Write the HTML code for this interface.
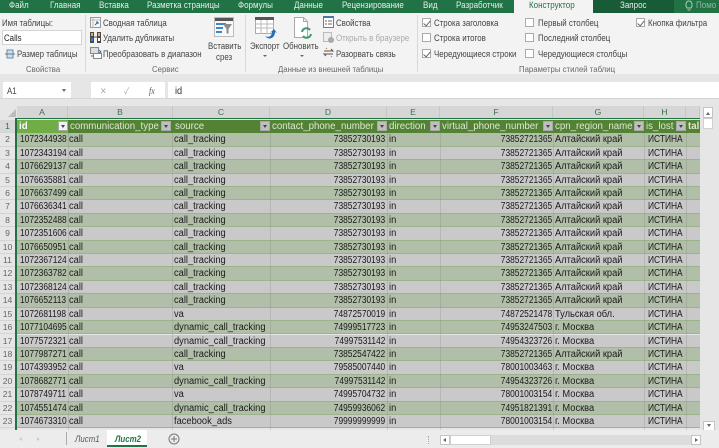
<!DOCTYPE html>
<html lang="ru"><head><meta charset="utf-8"><title>Excel</title>
<style>
*{box-sizing:border-box;margin:0;padding:0}
html,body{width:719px;height:448px;overflow:hidden;background:#e6e6e6}
body{font-family:"Liberation Sans","Noto Sans CJK SC",sans-serif;position:relative}
#w{position:absolute;left:0;top:0;width:719px;height:448px;filter:blur(.3px);overflow:hidden}
.a{position:absolute;white-space:nowrap}
.tab{top:0;height:13px;line-height:10px;font-size:9px;color:#e4efe8;transform:scaleX(.89);transform-origin:left}
.t{font-size:9px;color:#444;line-height:12px;transform:scaleX(.875);transform-origin:left}
.g{font-size:8.6px;color:#666;line-height:11px;transform:scaleX(.905);transform-origin:left}
.cb{width:9px;height:9px;background:#fff;border:1px solid #aaa;position:absolute}
.ck::after{content:"";position:absolute;left:2px;top:0;width:3px;height:6px;border:solid #666;border-width:0 1px 1px 0;transform:rotate(40deg)}
.sep{position:absolute;top:15px;height:57px;width:1px;background:#d8d8d8}
.ch{position:absolute;top:106px;height:12px;background:#d6d6d6;border-right:1px solid #c6c6c6;text-align:center;font-size:8.6px;line-height:12px;color:#3d6f52}
.r{position:absolute;left:17px;width:683px;height:13.41px;font-size:10px;line-height:13px;color:#1a1a1a}
.g1{background:#b1bfa8;border-bottom:1px solid #9db38d}
.g2{background:#c9c9c9;border-bottom:1px solid #9db38d}
.r b{position:absolute;top:0;height:13px;font-weight:normal;white-space:nowrap}
.v{position:absolute;top:133px;width:1px;height:297px;background:rgba(110,120,105,.22)}
.A{left:3px;width:48px}.B{left:52px}.C{left:157px}.D{left:253px;width:115px;text-align:right}.E{left:372px}.F{left:423px;width:112px;text-align:right}.G{left:538px}.H{left:631px}
.B,.C,.E,.G{transform:scaleX(.93);transform-origin:left}
.H{transform:scaleX(.84);transform-origin:left}
.n{display:inline-block;transform:scaleX(.84)}
.A .n{transform-origin:left}.D .n,.F .n{transform-origin:right}
.rn{position:absolute;left:0;width:15px;height:13.41px;text-align:center;font-size:8.6px;line-height:13px;color:#666;background:#e6e6e6;border-bottom:1px solid #d4d4d4}
.h{position:absolute;top:120px;height:13px;font-size:9.7px;line-height:13px;color:#dce8d2;background:#548235;white-space:nowrap;overflow:hidden;padding-left:2px}
.f{position:absolute;top:121px;width:10px;height:10px;background:#bfbfbf;border:1px solid #a8a8a8}
.f::after{content:"";position:absolute;left:2px;top:3px;border:2px solid transparent;border-top:3px solid #444}
</style></head><body><div id="w">
<!-- tab bar -->
<div class="a" style="left:0;top:0;width:719px;height:13px;background:#217346"></div>
<div class="a" style="left:593px;top:0;width:81px;height:13px;background:#185c37"></div>
<div class="a" style="left:514px;top:0;width:79px;height:14px;background:#f3f3f3"></div>
<div class="a tab" style="left:9px">Файл</div>
<div class="a tab" style="left:50px">Главная</div>
<div class="a tab" style="left:99px">Вставка</div>
<div class="a tab" style="left:147px">Разметка страницы</div>
<div class="a tab" style="left:238px">Формулы</div>
<div class="a tab" style="left:294px">Данные</div>
<div class="a tab" style="left:342px">Рецензирование</div>
<div class="a tab" style="left:423px">Вид</div>
<div class="a tab" style="left:456px">Разработчик</div>
<div class="a tab" style="left:529px;color:#217346">Конструктор</div>
<div class="a tab" style="left:620px">Запрос</div>
<svg class="a" style="left:684px;top:0" width="10" height="12" viewBox="0 0 10 12"><path d="M3 8C1 5 2 1 5 1s4 4 2 7zM3.500 10h3" fill="none" stroke="#a9cdb7"/></svg>
<div class="a tab" style="left:696px;color:#8fb8a2">Помо</div>
<!-- ribbon -->
<div class="a" style="left:0;top:13px;width:719px;height:61px;background:#f3f3f3"></div>
<div class="a" style="left:0;top:74px;width:719px;height:26px;background:#e6e6e6"></div>
<div class="sep" style="left:85px"></div><div class="sep" style="left:245px"></div><div class="sep" style="left:417px"></div>
<div class="a t" style="left:2px;top:17px">Имя таблицы:</div>
<div class="a" style="left:2px;top:30px;width:80px;height:15px;background:#fff;border:1px solid #d4d4d4"></div>
<div class="a t" style="left:4px;top:32px;color:#222">Calls</div>
<svg class="a" style="left:5px;top:49px" width="10" height="10" viewBox="0 0 10 10"><rect x="2" y="1" width="6" height="8" fill="#cfe0ee" stroke="#5a8fb8"/><path d="M0 5h10" stroke="#777"/></svg>
<div class="a t" style="left:17px;top:48px">Размер таблицы</div>
<div class="a g" style="left:26px;top:64px">Свойства</div>
<svg class="a" style="left:90px;top:17px" width="11" height="11" viewBox="0 0 11 11"><rect x=".5" y=".5" width="10" height="10" fill="#f7f7f7" stroke="#999"/><path d="M.5 3h10M3 .5v10" stroke="#bbb"/><path d="M5 8l3-3M8 5v2M8 5H6" stroke="#2a6fb0" fill="none"/></svg>
<div class="a t" style="left:103px;top:17px">Сводная таблица</div>
<svg class="a" style="left:90px;top:32px" width="11" height="11" viewBox="0 0 11 11"><rect x="0" y="0" width="4" height="11" fill="#4a4a4a"/><rect x="7" y="0" width="4" height="11" fill="#4a4a4a"/><rect x="1" y="1" width="2" height="3" fill="#e8b33a"/><rect x="1" y="6" width="2" height="3" fill="#3f7fc0"/><rect x="8" y="1" width="2" height="3" fill="#e8b33a"/><rect x="8" y="6" width="2" height="3" fill="#fff"/><path d="M4 5h3" stroke="#555"/></svg>
<div class="a t" style="left:103px;top:32px">Удалить дубликаты</div>
<svg class="a" style="left:90px;top:47px" width="12" height="12" viewBox="0 0 12 12"><rect x=".5" y=".5" width="8" height="6" fill="#ddd" stroke="#888"/><rect x="3.500" y="6.500" width="8" height="5" fill="#fff" stroke="#888"/><path d="M9 3l2 2-2 1M3 9l-2 0" stroke="#2a6fb0" fill="none"/></svg>
<div class="a t" style="left:103px;top:48px">Преобразовать в диапазон</div>
<div class="a g" style="left:152px;top:64px">Сервис</div>
<svg class="a" style="left:214px;top:17px" width="20" height="20" viewBox="0 0 20 20"><rect x=".5" y=".5" width="19" height="19" fill="#f8f8f8" stroke="#bbb"/><rect x="1" y="1" width="18" height="3" fill="#555"/><rect x="2" y="6" width="10" height="2" fill="#3f86c8"/><rect x="2" y="10" width="7" height="2" fill="#3f86c8"/><rect x="2" y="14" width="6" height="2" fill="#3f86c8"/><path d="M9 7h9l-3.500 5v5l-2-1v-4z" fill="#8c8c8c"/></svg>
<div class="a t" style="left:208px;top:40px">Вставить</div>
<div class="a t" style="left:216px;top:51px">срез</div>
<svg class="a" style="left:255px;top:17px" width="22" height="23" viewBox="0 0 22 23"><rect x=".5" y=".5" width="18" height="16" fill="#fff" stroke="#aaa"/><rect x="0" y="0" width="19" height="3" fill="#555"/><path d="M.5 7h18M.5 11h18M6 3v14M12 3v14" stroke="#bbb"/><path d="M10 19c4 2 7 0 7-4l-2 1 4-4 3 4-2-1c0 6-6 9-10 4z" fill="#2a6fb0"/></svg>
<div class="a t" style="left:250px;top:40px">Экспорт</div>
<div class="a" style="left:263px;top:55px;border:2px solid transparent;border-top:2px solid #666"></div>
<svg class="a" style="left:293px;top:17px" width="20" height="23" viewBox="0 0 20 23"><path d="M1.500.5h9l4 4v16h-13z" fill="#fff" stroke="#aaa"/><path d="M10.500.5v4h4" fill="none" stroke="#aaa"/><path d="M9 15a4.500 4.500 0 0 1 8-2M18 17a4.500 4.500 0 0 1-8 2" fill="none" stroke="#3f9a6a" stroke-width="2"/></svg>
<div class="a t" style="left:283px;top:40px">Обновить</div>
<div class="a" style="left:300px;top:55px;border:2px solid transparent;border-top:2px solid #666"></div>
<svg class="a" style="left:323px;top:16px" width="11" height="12" viewBox="0 0 11 12"><rect x=".5" y=".5" width="10" height="11" fill="#fff" stroke="#5a7fa8"/><rect x="0" y="0" width="11" height="2" fill="#4a78a8"/><path d="M2 5h2M5 5h4M2 8h2M5 8h4" stroke="#666"/></svg>
<div class="a t" style="left:336px;top:17px">Свойства</div>
<svg class="a" style="left:323px;top:32px" width="11" height="11" viewBox="0 0 11 11"><rect x=".5" y=".5" width="8" height="9" fill="#eee" stroke="#bbb"/><circle cx="8" cy="8" r="3" fill="#aaa"/></svg>
<div class="a t" style="left:336px;top:32px;color:#aaa">Открыть в браузере</div>
<svg class="a" style="left:323px;top:47px" width="11" height="11" viewBox="0 0 11 11"><path d="M1 4h9l-2-2M10 7H1l2 2" fill="none" stroke="#555"/><path d="M3 1l1 1M8 9l1 1" stroke="#d98030"/></svg>
<div class="a t" style="left:336px;top:48px">Разорвать связь</div>
<div class="a g" style="left:278px;top:64px">Данные из внешней таблицы</div>
<div class="cb ck" style="left:422px;top:18px"></div><div class="a t" style="left:434px;top:17px">Строка заголовка</div>
<div class="cb" style="left:422px;top:33px"></div><div class="a t" style="left:434px;top:32px">Строка итогов</div>
<div class="cb ck" style="left:422px;top:49px"></div><div class="a t" style="left:434px;top:48px">Чередующиеся строки</div>
<div class="cb" style="left:525px;top:18px"></div><div class="a t" style="left:538px;top:17px">Первый столбец</div>
<div class="cb" style="left:525px;top:33px"></div><div class="a t" style="left:538px;top:32px">Последний столбец</div>
<div class="cb" style="left:525px;top:49px"></div><div class="a t" style="left:538px;top:48px">Чередующиеся столбцы</div>
<div class="cb ck" style="left:636px;top:18px"></div><div class="a t" style="left:648px;top:17px">Кнопка фильтра</div>
<div class="a g" style="left:519px;top:64px">Параметры стилей таблиц</div>
<!-- formula bar -->
<div class="a" style="left:3px;top:82px;width:68px;height:16px;background:#fff"></div>
<div class="a t" style="left:7px;top:85px;color:#444">A1</div>
<div class="a" style="left:62px;top:89px;border:2px solid transparent;border-top:3px solid #666"></div>
<div class="a" style="left:91px;top:82px;width:74px;height:16px;background:#fff"></div>
<div class="a t" style="left:100px;top:85px;color:#aaa">✕</div>
<div class="a t" style="left:124px;top:85px;color:#aaa">✓</div>
<div class="a t" style="left:149px;top:85px;font-family:'Liberation Serif',serif;font-style:italic;color:#555">fx</div>
<div class="a" style="left:168px;top:82px;width:551px;height:16px;background:#fff"></div>
<div class="a t" style="left:175px;top:85px;color:#333;font-size:10.500px">id</div>
<!-- sheet -->
<div class="a" style="left:0;top:100px;width:719px;height:330px;background:#e6e6e6"></div>
<div class="a" style="left:0;top:98px;width:719px;height:1px;background:#d5d5d5"></div>
<div class="a" style="left:8px;top:109px;border:4px solid transparent;border-right:4px solid #bbb;border-bottom:4px solid #bbb"></div>
<div class="ch" style="left:17px;width:51px">A</div>
<div class="ch" style="left:68px;width:105px">B</div>
<div class="ch" style="left:173px;width:97px">C</div>
<div class="ch" style="left:270px;width:117px">D</div>
<div class="ch" style="left:387px;width:53px">E</div>
<div class="ch" style="left:440px;width:113px">F</div>
<div class="ch" style="left:553px;width:91px">G</div>
<div class="ch" style="left:644px;width:42px">H</div>
<div class="ch" style="left:686px;width:14px"></div>
<div class="a" style="left:16px;top:118px;width:684px;height:1px;background:#217346"></div>
<div class="a" style="left:15px;top:118px;width:2px;height:312px;background:#217346"></div>
<!-- header row -->
<div class="h" style="left:17px;width:51px;background:#70ad47;color:#fff;font-weight:bold">id</div>
<div class="h" style="left:68px;width:105px">communication_type</div>
<div class="h" style="left:173px;width:97px">source</div>
<div class="h" style="left:270px;width:117px">contact_phone_number</div>
<div class="h" style="left:387px;width:53px">direction</div>
<div class="h" style="left:440px;width:113px">virtual_phone_number</div>
<div class="h" style="left:553px;width:91px">cpn_region_name</div>
<div class="h" style="left:644px;width:42px">is_lost</div>
<div class="h" style="left:686px;width:14px;font-weight:bold">tal</div>
<div class="f" style="left:58px;background:#f2f2f2"></div><div class="f" style="left:161px"></div><div class="f" style="left:260px"></div><div class="f" style="left:377px"></div><div class="f" style="left:430px"></div><div class="f" style="left:543px"></div><div class="f" style="left:634px"></div><div class="f" style="left:676px"></div>
<div class="rn" style="top:119.5px;color:#217346;background:#d8d8d8">1</div>
<div class="rn" style="top:133.3px">2</div><div class="r g1" style="top:133.3px"><b class="A"><span class="n">1072344938</span></b><b class="B">call</b><b class="C">call_tracking</b><b class="D"><span class="n">73852730193</span></b><b class="E">in</b><b class="F"><span class="n">73852721365</span></b><b class="G">Алтайский край</b><b class="H">ИСТИНА</b></div>
<div class="rn" style="top:146.7px">3</div><div class="r g2" style="top:146.7px"><b class="A"><span class="n">1072343194</span></b><b class="B">call</b><b class="C">call_tracking</b><b class="D"><span class="n">73852730193</span></b><b class="E">in</b><b class="F"><span class="n">73852721365</span></b><b class="G">Алтайский край</b><b class="H">ИСТИНА</b></div>
<div class="rn" style="top:160.1px">4</div><div class="r g1" style="top:160.1px"><b class="A"><span class="n">1076629137</span></b><b class="B">call</b><b class="C">call_tracking</b><b class="D"><span class="n">73852730193</span></b><b class="E">in</b><b class="F"><span class="n">73852721365</span></b><b class="G">Алтайский край</b><b class="H">ИСТИНА</b></div>
<div class="rn" style="top:173.5px">5</div><div class="r g2" style="top:173.5px"><b class="A"><span class="n">1076635881</span></b><b class="B">call</b><b class="C">call_tracking</b><b class="D"><span class="n">73852730193</span></b><b class="E">in</b><b class="F"><span class="n">73852721365</span></b><b class="G">Алтайский край</b><b class="H">ИСТИНА</b></div>
<div class="rn" style="top:186.9px">6</div><div class="r g1" style="top:186.9px"><b class="A"><span class="n">1076637499</span></b><b class="B">call</b><b class="C">call_tracking</b><b class="D"><span class="n">73852730193</span></b><b class="E">in</b><b class="F"><span class="n">73852721365</span></b><b class="G">Алтайский край</b><b class="H">ИСТИНА</b></div>
<div class="rn" style="top:200.4px">7</div><div class="r g2" style="top:200.4px"><b class="A"><span class="n">1076636341</span></b><b class="B">call</b><b class="C">call_tracking</b><b class="D"><span class="n">73852730193</span></b><b class="E">in</b><b class="F"><span class="n">73852721365</span></b><b class="G">Алтайский край</b><b class="H">ИСТИНА</b></div>
<div class="rn" style="top:213.8px">8</div><div class="r g1" style="top:213.8px"><b class="A"><span class="n">1072352488</span></b><b class="B">call</b><b class="C">call_tracking</b><b class="D"><span class="n">73852730193</span></b><b class="E">in</b><b class="F"><span class="n">73852721365</span></b><b class="G">Алтайский край</b><b class="H">ИСТИНА</b></div>
<div class="rn" style="top:227.2px">9</div><div class="r g2" style="top:227.2px"><b class="A"><span class="n">1072351606</span></b><b class="B">call</b><b class="C">call_tracking</b><b class="D"><span class="n">73852730193</span></b><b class="E">in</b><b class="F"><span class="n">73852721365</span></b><b class="G">Алтайский край</b><b class="H">ИСТИНА</b></div>
<div class="rn" style="top:240.6px">10</div><div class="r g1" style="top:240.6px"><b class="A"><span class="n">1076650951</span></b><b class="B">call</b><b class="C">call_tracking</b><b class="D"><span class="n">73852730193</span></b><b class="E">in</b><b class="F"><span class="n">73852721365</span></b><b class="G">Алтайский край</b><b class="H">ИСТИНА</b></div>
<div class="rn" style="top:254px">11</div><div class="r g2" style="top:254px"><b class="A"><span class="n">1072367124</span></b><b class="B">call</b><b class="C">call_tracking</b><b class="D"><span class="n">73852730193</span></b><b class="E">in</b><b class="F"><span class="n">73852721365</span></b><b class="G">Алтайский край</b><b class="H">ИСТИНА</b></div>
<div class="rn" style="top:267.4px">12</div><div class="r g1" style="top:267.4px"><b class="A"><span class="n">1072363782</span></b><b class="B">call</b><b class="C">call_tracking</b><b class="D"><span class="n">73852730193</span></b><b class="E">in</b><b class="F"><span class="n">73852721365</span></b><b class="G">Алтайский край</b><b class="H">ИСТИНА</b></div>
<div class="rn" style="top:280.8px">13</div><div class="r g2" style="top:280.8px"><b class="A"><span class="n">1072368124</span></b><b class="B">call</b><b class="C">call_tracking</b><b class="D"><span class="n">73852730193</span></b><b class="E">in</b><b class="F"><span class="n">73852721365</span></b><b class="G">Алтайский край</b><b class="H">ИСТИНА</b></div>
<div class="rn" style="top:294.2px">14</div><div class="r g1" style="top:294.2px"><b class="A"><span class="n">1076652113</span></b><b class="B">call</b><b class="C">call_tracking</b><b class="D"><span class="n">73852730193</span></b><b class="E">in</b><b class="F"><span class="n">73852721365</span></b><b class="G">Алтайский край</b><b class="H">ИСТИНА</b></div>
<div class="rn" style="top:307.6px">15</div><div class="r g2" style="top:307.6px"><b class="A"><span class="n">1072681198</span></b><b class="B">call</b><b class="C">va</b><b class="D"><span class="n">74872570019</span></b><b class="E">in</b><b class="F"><span class="n">74872521478</span></b><b class="G">Тульская обл.</b><b class="H">ИСТИНА</b></div>
<div class="rn" style="top:321px">16</div><div class="r g1" style="top:321px"><b class="A"><span class="n">1077104695</span></b><b class="B">call</b><b class="C">dynamic_call_tracking</b><b class="D"><span class="n">74999517723</span></b><b class="E">in</b><b class="F"><span class="n">74953247503</span></b><b class="G">г. Москва</b><b class="H">ИСТИНА</b></div>
<div class="rn" style="top:334.5px">17</div><div class="r g2" style="top:334.5px"><b class="A"><span class="n">1077572321</span></b><b class="B">call</b><b class="C">dynamic_call_tracking</b><b class="D"><span class="n">74997531142</span></b><b class="E">in</b><b class="F"><span class="n">74954323726</span></b><b class="G">г. Москва</b><b class="H">ИСТИНА</b></div>
<div class="rn" style="top:347.9px">18</div><div class="r g1" style="top:347.9px"><b class="A"><span class="n">1077987271</span></b><b class="B">call</b><b class="C">call_tracking</b><b class="D"><span class="n">73852547422</span></b><b class="E">in</b><b class="F"><span class="n">73852721365</span></b><b class="G">Алтайский край</b><b class="H">ИСТИНА</b></div>
<div class="rn" style="top:361.3px">19</div><div class="r g2" style="top:361.3px"><b class="A"><span class="n">1074393952</span></b><b class="B">call</b><b class="C">va</b><b class="D"><span class="n">79585007440</span></b><b class="E">in</b><b class="F"><span class="n">78001003463</span></b><b class="G">г. Москва</b><b class="H">ИСТИНА</b></div>
<div class="rn" style="top:374.7px">20</div><div class="r g1" style="top:374.7px"><b class="A"><span class="n">1078682771</span></b><b class="B">call</b><b class="C">dynamic_call_tracking</b><b class="D"><span class="n">74997531142</span></b><b class="E">in</b><b class="F"><span class="n">74954323726</span></b><b class="G">г. Москва</b><b class="H">ИСТИНА</b></div>
<div class="rn" style="top:388.1px">21</div><div class="r g2" style="top:388.1px"><b class="A"><span class="n">1078749711</span></b><b class="B">call</b><b class="C">va</b><b class="D"><span class="n">74995704732</span></b><b class="E">in</b><b class="F"><span class="n">78001003154</span></b><b class="G">г. Москва</b><b class="H">ИСТИНА</b></div>
<div class="rn" style="top:401.5px">22</div><div class="r g1" style="top:401.5px"><b class="A"><span class="n">1074551474</span></b><b class="B">call</b><b class="C">dynamic_call_tracking</b><b class="D"><span class="n">74959936062</span></b><b class="E">in</b><b class="F"><span class="n">74951821391</span></b><b class="G">г. Москва</b><b class="H">ИСТИНА</b></div>
<div class="rn" style="top:414.9px">23</div><div class="r g2" style="top:414.9px"><b class="A"><span class="n">1074673310</span></b><b class="B">call</b><b class="C">facebook_ads</b><b class="D"><span class="n">79999999999</span></b><b class="E">in</b><b class="F"><span class="n">78001003154</span></b><b class="G">г. Москва</b><b class="H">ИСТИНА</b></div>
<i class="v" style="left:68px"></i><i class="v" style="left:172px"></i><i class="v" style="left:270px"></i><i class="v" style="left:387px"></i><i class="v" style="left:440px"></i><i class="v" style="left:553px"></i><i class="v" style="left:644px"></i><i class="v" style="left:686px"></i>
<!-- vertical scrollbar -->
<div class="a" style="left:700px;top:100px;width:19px;height:330px;background:#e6e6e6"></div>
<div class="a" style="left:703px;top:107px;width:10px;height:11px;background:#fff;border:1px solid #c4c4c4"></div>
<div class="a" style="left:706px;top:110px;border:2px solid transparent;border-bottom:3px solid #666"></div>
<div class="a" style="left:703px;top:118px;width:10px;height:11px;background:#fff;border:1px solid #d0d0d0"></div>
<div class="a" style="left:703px;top:421px;width:12px;height:10px;background:#fff;border:1px solid #c4c4c4"></div>
<div class="a" style="left:707px;top:424px;border:2px solid transparent;border-top:3px solid #666"></div>
<!-- bottom bar -->
<div class="a" style="left:0;top:430px;width:719px;height:18px;background:#ececec"></div>
<div class="a" style="left:17px;top:437px;border:2px solid transparent;border-right:3px solid #ccc"></div>
<div class="a" style="left:37px;top:437px;border:2px solid transparent;border-left:3px solid #ccc"></div>
<div class="a" style="left:66px;top:432px;width:1px;height:13px;background:#aaa"></div>
<div class="a t" style="left:75px;top:433px;font-style:italic;color:#555">Лист1</div>
<div class="a" style="left:107px;top:430px;width:40px;height:17px;background:#fff;border-bottom:2px solid #217346"></div>
<div class="a t" style="left:115px;top:433px;font-weight:bold;font-style:italic;color:#217346">Лист2</div>
<svg class="a" style="left:168px;top:433px" width="12" height="12" viewBox="0 0 12 12"><circle cx="6" cy="6" r="5" fill="none" stroke="#777"/><path d="M6 3v6M3 6h6" stroke="#777"/></svg>
<div class="a" style="left:428px;top:436px;width:2px;height:8px;border-left:1px dotted #aaa"></div>
<div class="a" style="left:440px;top:435px;width:260px;height:10px;background:#dcdcdc"></div>
<div class="a" style="left:440px;top:435px;width:10px;height:10px;background:#fff;border:1px solid #c4c4c4"></div>
<div class="a" style="left:443px;top:438px;border:2px solid transparent;border-right:3px solid #666;margin-left:-2px"></div>
<div class="a" style="left:450px;top:435px;width:41px;height:10px;background:#fff;border:1px solid #d0d0d0"></div>
<div class="a" style="left:691px;top:435px;width:10px;height:10px;background:#fff;border:1px solid #c4c4c4"></div>
<div class="a" style="left:695px;top:438px;border:2px solid transparent;border-left:3px solid #666"></div>
</div></body></html>
